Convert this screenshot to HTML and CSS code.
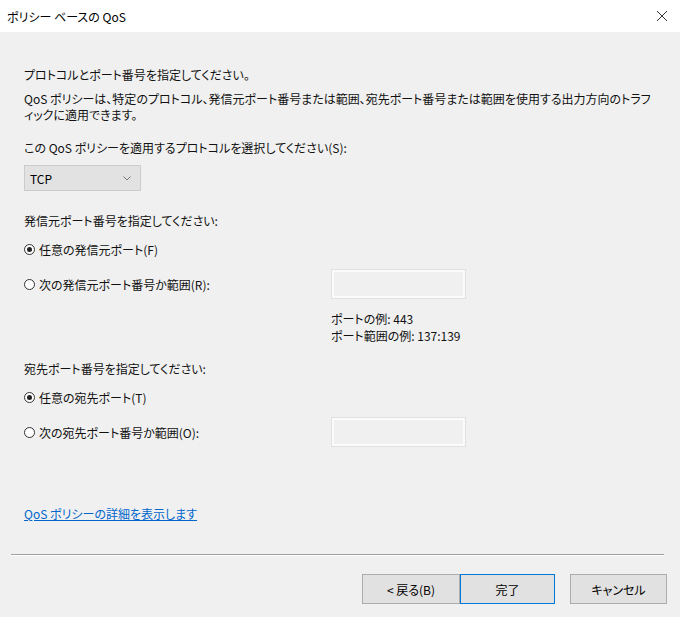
FILE: index.html
```html
<!DOCTYPE html>
<html lang="ja">
<head>
  <meta charset="UTF-8">
  <meta name="viewport" content="width=device-width, initial-scale=1.0">
  <title>ポリシー ベースの QoS</title>

  <link rel="stylesheet" href="styles.css">
</head>
<body>
  <div class="titlebar">
    <span class="title">ポリシー ベースの QoS</span>
    <span class="close">
      <svg width="12" height="12" viewBox="0 0 12 12"><path d="M1 1L11 11M11 1L1 11" stroke="#333" stroke-width="1" fill="none"/></svg>
    </span>
  </div>

  <div class="content">
    <p class="intro">プロトコルとポート番号を指定してください。</p>
    <p class="desc">QoS ポリシーは、特定のプロトコル、発信元ポート番号または範囲、宛先ポート番号または範囲を使用する出力方向のトラフ<br>ィックに適用できます。</p>

    <p class="label select-label">この QoS ポリシーを適用するプロトコルを選択してください(S):</p>
    <div class="select">
      <span>TCP</span>
      <svg width="8" height="5" viewBox="0 0 8 5"><path d="M0.5 0.5L4 4L7.5 0.5" stroke="#777" stroke-width="1" fill="none"/></svg>
    </div>

    <p class="label section-label">発信元ポート番号を指定してください:</p>
    <div class="radio-row first">
      <span class="radio checked"></span>
      <span>任意の発信元ポート(F)</span>
    </div>
    <div class="radio-row range">
      <span class="radio"></span>
      <span class="radio-text">次の発信元ポート番号か範囲(R):</span>
      <div class="textbox"></div>
    </div>
    <div class="examples">
      <div>ポートの例: 443</div>
      <div>ポート範囲の例: 137:139</div>
    </div>

    <p class="label dest-label">宛先ポート番号を指定してください:</p>
    <div class="radio-row first">
      <span class="radio checked"></span>
      <span>任意の宛先ポート(T)</span>
    </div>
    <div class="radio-row range">
      <span class="radio"></span>
      <span class="radio-text">次の宛先ポート番号か範囲(O):</span>
      <div class="textbox"></div>
    </div>

    <a class="link" href="#">QoS ポリシーの詳細を表示します</a>
  </div>

  <div class="footer">
    <div class="separator"></div>
    <div class="buttons">
      <button class="btn back">&lt; 戻る(B)</button>
      <button class="btn finish">完了</button>
      <button class="btn cancel">キャンセル</button>
    </div>
  </div>
</body>
</html>
```

FILE: styles.css
```css
body {
    margin: 0;
    background-color: #f0f0f0;
    font-family: "Noto Sans CJK JP", "Noto Sans", sans-serif;
    font-size: 12px;
    line-height: 15px;
    font-feature-settings: "palt";
    color: #111;
    width: 680px;
    height: 617px;
    overflow: hidden;
}

p {
    margin: 0;
}

.titlebar {
    height: 32px;
    background-color: #fff;
    display: flex;
    align-items: center;
    justify-content: space-between;
    padding: 0 12px 0 7px;
}
.title {
    font-size: 12px;
    color: #000;
}
.close {
    display: flex;
}

.content {
    padding-left: 24px;
}

.intro {
    margin-top: 35px;
}
.desc {
    margin-top: 9px;
    line-height: 16px;
    white-space: nowrap;
}
.select-label {
    margin-top: 17px;
}

.select {
    margin-top: 10px;
    width: 117px;
    height: 26px;
    box-sizing: border-box;
    border: 1px solid #cccccc;
    background-color: #e2e2e2;
    display: flex;
    align-items: center;
    justify-content: space-between;
    padding: 0 9px 0 5px;
    color: #000;
}

.section-label {
    margin-top: 22px;
}
.dest-label {
    margin-top: 17px;
}

.radio-row {
    display: flex;
    align-items: center;
}
.radio-row.first {
    margin-top: 14px;
}
.radio-row.range {
    margin-top: 12px;
}
.radio-text {
    width: 292px;
}

.radio {
    width: 11px;
    height: 11px;
    box-sizing: border-box;
    border: 1px solid #333;
    border-radius: 50%;
    background-color: #fff;
    margin-right: 4px;
    position: relative;
}
.radio.checked::after {
    content: "";
    position: absolute;
    left: 2px;
    top: 2px;
    width: 5px;
    height: 5px;
    border-radius: 50%;
    background-color: #222;
}

.textbox {
    width: 135px;
    height: 30px;
    box-sizing: border-box;
    border: 1px solid #e0e0e0;
    box-shadow: inset 0 0 0 2px #fbfbfb;
    background-color: #f0f0f0;
}

.examples {
    margin-top: 11px;
    margin-left: 307px;
    line-height: 17px;
}

.link {
    display: inline-block;
    margin-top: 59px;
    color: #0066cc;
    text-decoration: underline;
}

.footer {
    padding: 0 13px 0 11px;
}
.separator {
    margin-top: 33px;
    margin-right: 3px;
    height: 1px;
    background-color: #a0a0a0;
    border-bottom: 1px solid #fff;
}
.buttons {
    margin-top: 18px;
    display: flex;
    justify-content: flex-end;
}

.btn {
    height: 30px;
    box-sizing: border-box;
    border: 1px solid #adadad;
    background-color: #e1e1e1;
    font-family: "Noto Sans CJK JP", "Noto Sans", sans-serif;
    font-size: 12px;
    font-feature-settings: "palt";
    color: #000;
    padding: 0;
}
.back {
    width: 98px;
}
.finish {
    width: 95px;
    border-color: #0078d7;
}
.cancel {
    width: 97px;
    margin-left: 15px;
}
```
